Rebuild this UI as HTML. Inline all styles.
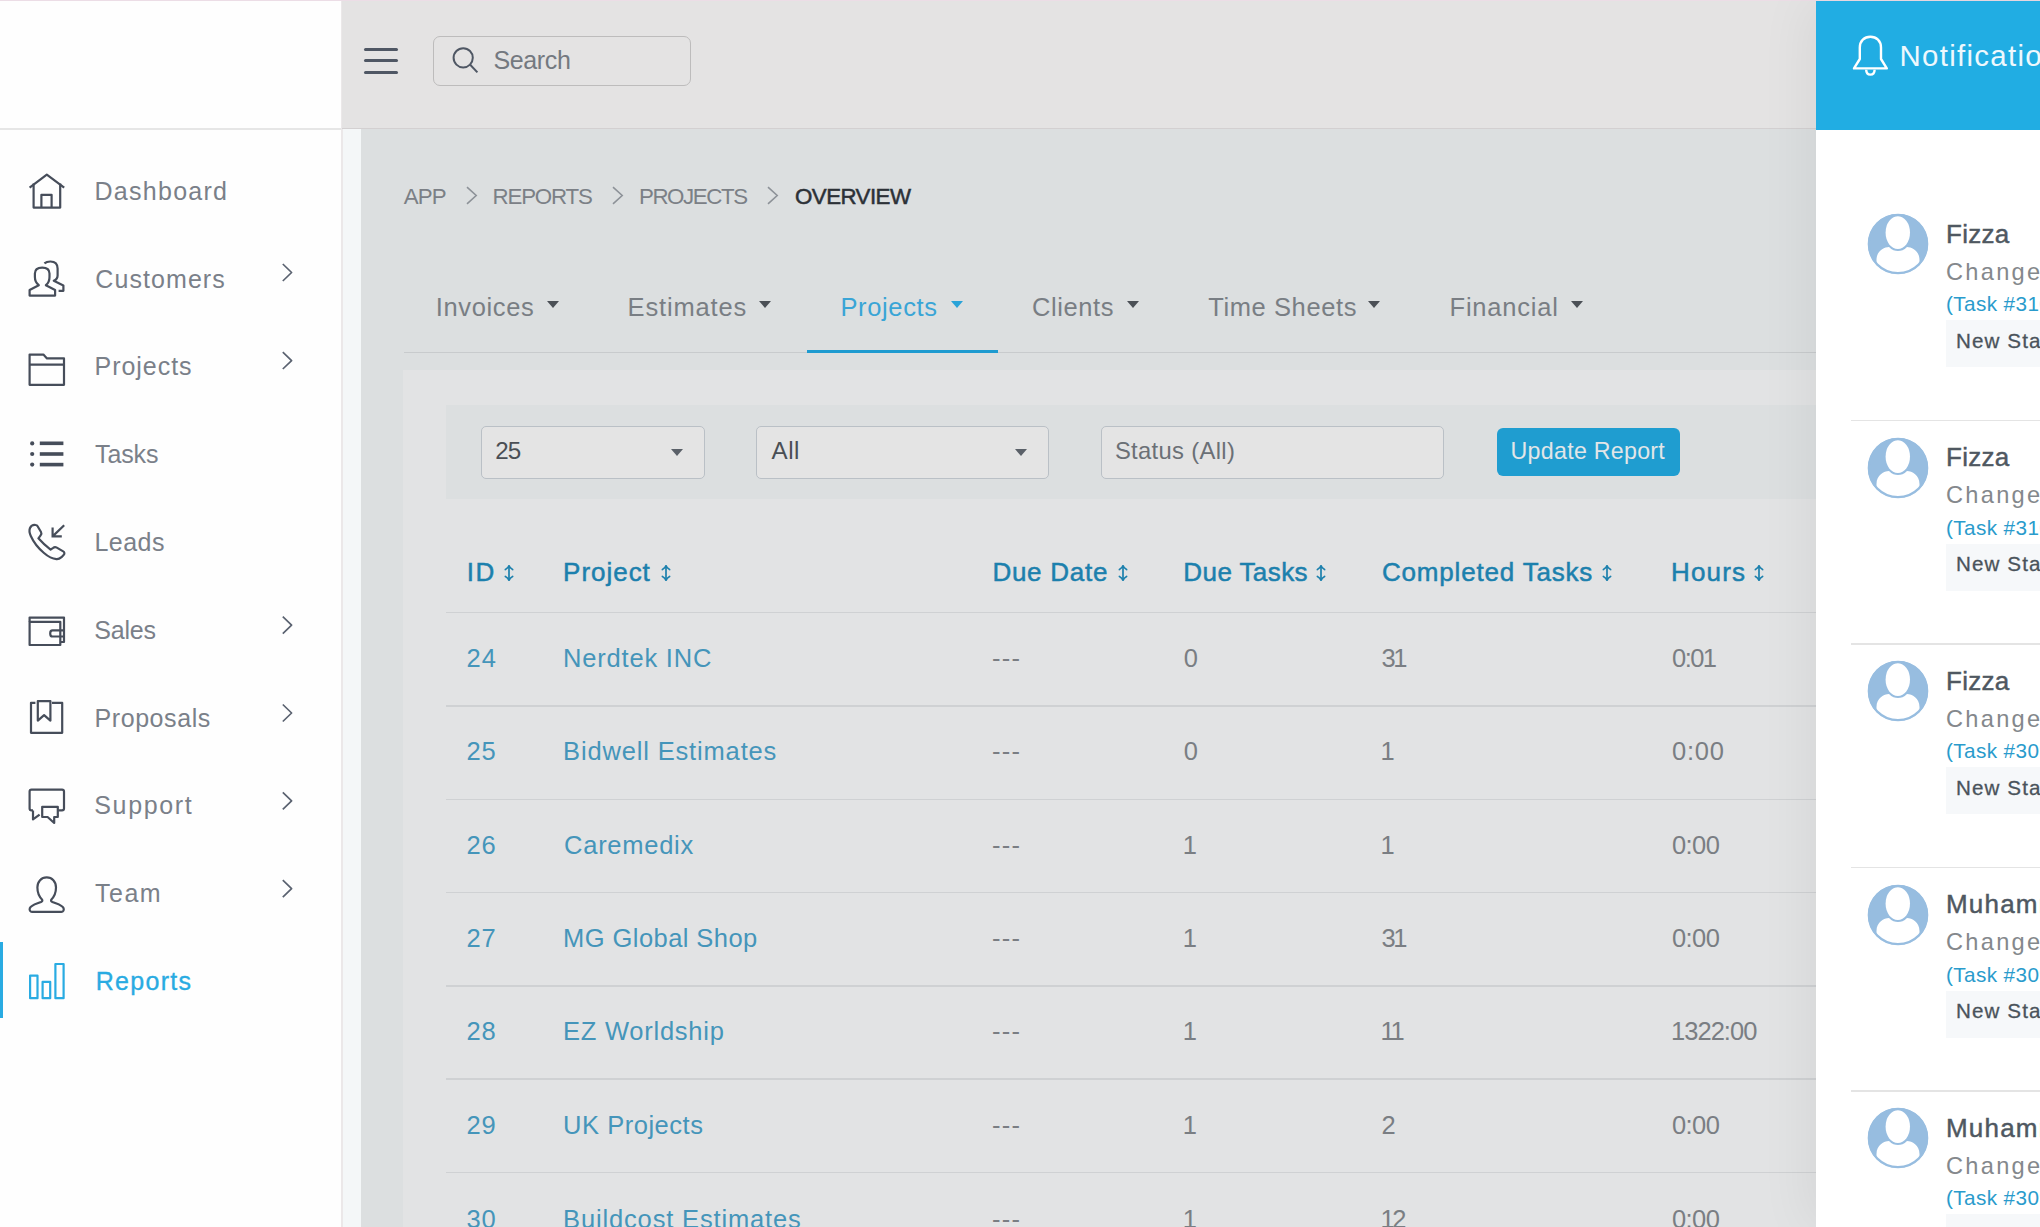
<!DOCTYPE html>
<html><head><meta charset="utf-8"><style>
html,body{margin:0;padding:0}
body{width:2040px;height:1227px;overflow:hidden;position:relative;background:#dcdfe0;font-family:"Liberation Sans",sans-serif}
.ab{position:absolute}
.t{position:absolute;line-height:1;white-space:nowrap}
.bm{display:inline-block;width:0;height:0}
.caret{position:absolute;width:0;height:0;border-left:6.2px solid transparent;border-right:6.2px solid transparent;border-top:7.4px solid #4b5056}
.sel{position:absolute;box-sizing:border-box;border:1.5px solid #bac0c6;border-radius:5px;background:#e4e4e4}
</style></head><body>
<div class="ab" style="left:0;top:0;width:2040px;height:1px;background:#ecdde6"></div>
<div class="ab" style="left:0;top:1px;width:341px;height:1226px;background:#fefefe"></div>
<div class="ab" style="left:341px;top:1px;width:1.6px;height:1226px;background:#ebe8e9"></div>
<div class="ab" style="left:0;top:128px;width:341px;height:1.5px;background:#e6e6e6"></div>
<div class="ab" style="left:342px;top:1px;width:1474px;height:127px;background:#e4e3e3"></div>
<div class="ab" style="left:342px;top:128px;width:1474px;height:1px;background:#d3d0d1"></div>
<div class="ab" style="left:342.6px;top:129px;width:18.4px;height:1100px;background:#f4f7f8"></div>
<div class="ab" style="left:0;top:942px;width:3px;height:76px;background:#29abe2"></div>
<!-- hamburger -->
<div class="ab" style="left:363.5px;top:47.5px;width:34.6px;height:3px;border-radius:1.5px;background:#4f5764"></div>
<div class="ab" style="left:363.5px;top:59px;width:34.6px;height:3px;border-radius:1.5px;background:#4f5764"></div>
<div class="ab" style="left:363.5px;top:70.8px;width:34.6px;height:3px;border-radius:1.5px;background:#4f5764"></div>
<!-- search box -->
<div class="ab" style="left:432.5px;top:36.3px;width:258px;height:50px;box-sizing:border-box;border:1.5px solid #bdbcbc;border-radius:7px"></div>
<svg class="ab" style="left:448px;top:44px" width="34" height="34" viewBox="0 0 34 34" fill="none" stroke="#4f5764" stroke-width="2"><circle cx="15.2" cy="13.8" r="9.6"/><path d="M22.2 20.8 L29.4 28.4"/></svg>
<!-- breadcrumbs chevrons -->
<svg class="ab" style="left:466.3px;top:186px" width="12" height="19" viewBox="0 0 12 19" fill="none" stroke="#8d9298" stroke-width="1.6"><path d="M1 1.2 L10.2 9.5 L1 17.8"/></svg><svg class="ab" style="left:611.5px;top:186px" width="12" height="19" viewBox="0 0 12 19" fill="none" stroke="#8d9298" stroke-width="1.6"><path d="M1 1.2 L10.2 9.5 L1 17.8"/></svg><svg class="ab" style="left:767px;top:186px" width="12" height="19" viewBox="0 0 12 19" fill="none" stroke="#8d9298" stroke-width="1.6"><path d="M1 1.2 L10.2 9.5 L1 17.8"/></svg>
<!-- tabs -->
<div class="ab" style="left:403.5px;top:352px;width:1413px;height:1.3px;background:#c8cbcd"></div>
<div class="ab" style="left:807px;top:350.3px;width:191px;height:3.2px;background:#1e9bd0"></div>
<div class="caret" style="left:546.5px;top:301px;border-top-color:#4b5056"></div><div class="caret" style="left:759.4px;top:301px;border-top-color:#4b5056"></div><div class="caret" style="left:950.6px;top:301px;border-top-color:#29a3d8"></div><div class="caret" style="left:1127px;top:301px;border-top-color:#4b5056"></div><div class="caret" style="left:1368px;top:301px;border-top-color:#4b5056"></div><div class="caret" style="left:1570.6px;top:301px;border-top-color:#4b5056"></div>
<!-- card -->
<div class="ab" style="left:403px;top:370px;width:1413px;height:860px;background:#e2e3e4"></div>
<div class="ab" style="left:446px;top:405px;width:1370px;height:94px;background:#dcdfe0"></div>
<div class="sel" style="left:481px;top:425.8px;width:224px;height:53px"></div>
<div class="sel" style="left:756px;top:425.8px;width:293px;height:53px"></div>
<div class="sel" style="left:1100.5px;top:425.8px;width:343.5px;height:53px"></div>
<div class="caret" style="left:670.8px;top:449px;border-left-width:6.7px;border-right-width:6.7px;border-top-width:7px;border-top-color:#5a6068"></div>
<div class="caret" style="left:1015.2px;top:449px;border-left-width:6.7px;border-right-width:6.7px;border-top-width:7px;border-top-color:#5a6068"></div>
<div class="ab" style="left:1497px;top:428.3px;width:183px;height:48px;border-radius:6px;background:#1f9dd0"></div>
<!-- table -->
<div class="ab" style="left:446px;top:611.5px;width:1370px;height:1.5px;background:#cfd1d3"></div><div class="ab" style="left:446px;top:705.0px;width:1370px;height:1.5px;background:#cfd1d3"></div><div class="ab" style="left:446px;top:798.5px;width:1370px;height:1.5px;background:#cfd1d3"></div><div class="ab" style="left:446px;top:891.9px;width:1370px;height:1.5px;background:#cfd1d3"></div><div class="ab" style="left:446px;top:985.1px;width:1370px;height:1.5px;background:#cfd1d3"></div><div class="ab" style="left:446px;top:1078.3px;width:1370px;height:1.5px;background:#cfd1d3"></div><div class="ab" style="left:446px;top:1171.8px;width:1370px;height:1.5px;background:#cfd1d3"></div>
<svg class="ab" style="left:503px;top:564.2px" width="12" height="18" viewBox="0 0 12 18" fill="none" stroke="#1c80ad" stroke-width="1.7" stroke-linecap="round"><path d="M6 2 V16"/><path d="M2.4 5.6 C4.6 4.6 5.6 3 6 1.4 C6.4 3 7.4 4.6 9.6 5.6 M2.4 12.4 C4.6 13.4 5.6 15 6 16.6 C6.4 15 7.4 13.4 9.6 12.4"/></svg><svg class="ab" style="left:660.2px;top:564.2px" width="12" height="18" viewBox="0 0 12 18" fill="none" stroke="#1c80ad" stroke-width="1.7" stroke-linecap="round"><path d="M6 2 V16"/><path d="M2.4 5.6 C4.6 4.6 5.6 3 6 1.4 C6.4 3 7.4 4.6 9.6 5.6 M2.4 12.4 C4.6 13.4 5.6 15 6 16.6 C6.4 15 7.4 13.4 9.6 12.4"/></svg><svg class="ab" style="left:1116.9px;top:564.2px" width="12" height="18" viewBox="0 0 12 18" fill="none" stroke="#1c80ad" stroke-width="1.7" stroke-linecap="round"><path d="M6 2 V16"/><path d="M2.4 5.6 C4.6 4.6 5.6 3 6 1.4 C6.4 3 7.4 4.6 9.6 5.6 M2.4 12.4 C4.6 13.4 5.6 15 6 16.6 C6.4 15 7.4 13.4 9.6 12.4"/></svg><svg class="ab" style="left:1315.2px;top:564.2px" width="12" height="18" viewBox="0 0 12 18" fill="none" stroke="#1c80ad" stroke-width="1.7" stroke-linecap="round"><path d="M6 2 V16"/><path d="M2.4 5.6 C4.6 4.6 5.6 3 6 1.4 C6.4 3 7.4 4.6 9.6 5.6 M2.4 12.4 C4.6 13.4 5.6 15 6 16.6 C6.4 15 7.4 13.4 9.6 12.4"/></svg><svg class="ab" style="left:1600.5px;top:564.2px" width="12" height="18" viewBox="0 0 12 18" fill="none" stroke="#1c80ad" stroke-width="1.7" stroke-linecap="round"><path d="M6 2 V16"/><path d="M2.4 5.6 C4.6 4.6 5.6 3 6 1.4 C6.4 3 7.4 4.6 9.6 5.6 M2.4 12.4 C4.6 13.4 5.6 15 6 16.6 C6.4 15 7.4 13.4 9.6 12.4"/></svg><svg class="ab" style="left:1753.3px;top:564.2px" width="12" height="18" viewBox="0 0 12 18" fill="none" stroke="#1c80ad" stroke-width="1.7" stroke-linecap="round"><path d="M6 2 V16"/><path d="M2.4 5.6 C4.6 4.6 5.6 3 6 1.4 C6.4 3 7.4 4.6 9.6 5.6 M2.4 12.4 C4.6 13.4 5.6 15 6 16.6 C6.4 15 7.4 13.4 9.6 12.4"/></svg>
<!-- notif panel -->
<div class="ab" style="left:1816px;top:1px;width:300px;height:1226px;background:#ffffff;box-shadow:-8px 0 50px rgba(0,0,0,0.06)"></div>
<div class="ab" style="left:1816px;top:1px;width:300px;height:128.6px;background:#21ade3"></div>
<svg class="ab" style="left:1850px;top:34px" width="42" height="44" viewBox="0 0 42 44" fill="none" stroke="#fff" stroke-width="2.4" stroke-linejoin="round"><path d="M4 34.4 L9.8 25 V13.6 C9.8 6.8 14.4 2.8 20.4 2.8 C26.4 2.8 31 6.8 31 13.6 V25 L36.8 34.4 Z"/><path d="M16.2 35.8 C16.2 39 18 40.6 20.4 40.6 C22.8 40.6 24.6 39 24.6 35.8"/></svg>
<svg class="ab" style="left:1867px;top:213.0px" width="62" height="62" viewBox="0 0 62 62">
<defs><clipPath id="cp0"><circle cx="31" cy="31" r="30"/></clipPath></defs>
<circle cx="31" cy="31" r="30" fill="#97bde0"/>
<g clip-path="url(#cp0)" fill="#fff"><ellipse cx="30.8" cy="19.6" rx="12.2" ry="16.4"/><path d="M9.5 61 V47 C9.5 38 17 34 22 34 C25 37 28 38 31 38 C34 38 37 37 40 34 C45 34 52.5 38 52.5 47 V61 Z"/></g><circle cx="31" cy="31" r="29.2" fill="none" stroke="#97bde0" stroke-width="2.2"/>
</svg><div class="ab" style="left:1946px;top:320.3px;width:200px;height:47px;background:#f6f8fa"></div><div class="ab" style="left:1851px;top:419.6px;width:200px;height:1.5px;background:#e4e4e4"></div><svg class="ab" style="left:1867px;top:436.5px" width="62" height="62" viewBox="0 0 62 62">
<defs><clipPath id="cp1"><circle cx="31" cy="31" r="30"/></clipPath></defs>
<circle cx="31" cy="31" r="30" fill="#97bde0"/>
<g clip-path="url(#cp1)" fill="#fff"><ellipse cx="30.8" cy="19.6" rx="12.2" ry="16.4"/><path d="M9.5 61 V47 C9.5 38 17 34 22 34 C25 37 28 38 31 38 C34 38 37 37 40 34 C45 34 52.5 38 52.5 47 V61 Z"/></g><circle cx="31" cy="31" r="29.2" fill="none" stroke="#97bde0" stroke-width="2.2"/>
</svg><div class="ab" style="left:1946px;top:543.8px;width:200px;height:47px;background:#f6f8fa"></div><div class="ab" style="left:1851px;top:643.1px;width:200px;height:1.5px;background:#e4e4e4"></div><svg class="ab" style="left:1867px;top:660.0px" width="62" height="62" viewBox="0 0 62 62">
<defs><clipPath id="cp2"><circle cx="31" cy="31" r="30"/></clipPath></defs>
<circle cx="31" cy="31" r="30" fill="#97bde0"/>
<g clip-path="url(#cp2)" fill="#fff"><ellipse cx="30.8" cy="19.6" rx="12.2" ry="16.4"/><path d="M9.5 61 V47 C9.5 38 17 34 22 34 C25 37 28 38 31 38 C34 38 37 37 40 34 C45 34 52.5 38 52.5 47 V61 Z"/></g><circle cx="31" cy="31" r="29.2" fill="none" stroke="#97bde0" stroke-width="2.2"/>
</svg><div class="ab" style="left:1946px;top:767.3px;width:200px;height:47px;background:#f6f8fa"></div><div class="ab" style="left:1851px;top:866.6px;width:200px;height:1.5px;background:#e4e4e4"></div><svg class="ab" style="left:1867px;top:883.5px" width="62" height="62" viewBox="0 0 62 62">
<defs><clipPath id="cp3"><circle cx="31" cy="31" r="30"/></clipPath></defs>
<circle cx="31" cy="31" r="30" fill="#97bde0"/>
<g clip-path="url(#cp3)" fill="#fff"><ellipse cx="30.8" cy="19.6" rx="12.2" ry="16.4"/><path d="M9.5 61 V47 C9.5 38 17 34 22 34 C25 37 28 38 31 38 C34 38 37 37 40 34 C45 34 52.5 38 52.5 47 V61 Z"/></g><circle cx="31" cy="31" r="29.2" fill="none" stroke="#97bde0" stroke-width="2.2"/>
</svg><div class="ab" style="left:1946px;top:990.8px;width:200px;height:47px;background:#f6f8fa"></div><div class="ab" style="left:1851px;top:1090.1px;width:200px;height:1.5px;background:#e4e4e4"></div><svg class="ab" style="left:1867px;top:1107.0px" width="62" height="62" viewBox="0 0 62 62">
<defs><clipPath id="cp4"><circle cx="31" cy="31" r="30"/></clipPath></defs>
<circle cx="31" cy="31" r="30" fill="#97bde0"/>
<g clip-path="url(#cp4)" fill="#fff"><ellipse cx="30.8" cy="19.6" rx="12.2" ry="16.4"/><path d="M9.5 61 V47 C9.5 38 17 34 22 34 C25 37 28 38 31 38 C34 38 37 37 40 34 C45 34 52.5 38 52.5 47 V61 Z"/></g><circle cx="31" cy="31" r="29.2" fill="none" stroke="#97bde0" stroke-width="2.2"/>
</svg><div class="ab" style="left:1946px;top:1214.3px;width:200px;height:47px;background:#f6f8fa"></div>
<svg class="ab" style="left:0;top:0" width="341" height="1227" viewBox="0 0 341 1227" fill="none" stroke="#464d5a" stroke-width="2.2" stroke-linejoin="round">
<path d="M29.6 187.6 L46.8 174.6 L64.2 187.6"/>
<path d="M33.6 183.5 V207.6 H60.2 V183.5"/>
<path d="M41.4 207.6 V194.8 H51.6 V207.6"/>
<!-- customers -->
<path d="M44.4 263.4 C46 262 48 261.5 50.4 261.5 C54.8 261.5 57.6 264 57.6 268.6 V275.4 C57.6 277.8 56.2 279.6 53.8 280.8 L63.4 285.6 V290.8 H58.6"/>
<path d="M38.8 285.2 C36.2 283.2 34.9 280.5 34.9 277 V273.6 C34.9 269.6 37.8 267.6 42.2 267.6 C46.6 267.6 49.5 269.6 49.5 273.6 V277 C49.5 280.5 48.4 283.2 45.9 285.2 L55.1 290 V295.6 H29.6 V290 Z"/>
<!-- folder -->
<path d="M29.6 384.8 V354.6 H43.4 L47 358.4 H64 V384.8 Z"/>
<path d="M29.6 364.6 H64"/>
<!-- leads: phone -->
<path d="M35.7 525 C33.5 524.6 31 526 30 528 C29.2 530 29.4 533 30.8 536 C33.5 542 38 548 44 553 C48 556.5 52 558.8 56.5 559.2 C58.5 559.4 60 558.5 61.5 557.2 L63.6 555 C64.8 553.8 64.6 552.2 63.2 551.4 L56.8 547.6 C55.6 546.9 54.2 547 53.2 547.8 L50.6 549.6 C46 546.2 41.8 542.2 38.4 538.3 L40.6 535.4 C41.4 534.4 41.6 533 41 532 L37.6 526.2 C37.2 525.5 36.5 525.1 35.7 525 Z"/>
<path d="M64.2 525.2 L52.6 536.4 M52.6 527.4 V536.4 H61.8" stroke-width="2.2" stroke-linejoin="miter"/>
<!-- sales: wallet -->
<path d="M29.6 621.8 V617.6 H64 V642 H60.3"/>
<path d="M29.6 621.8 H60.3 V645 H29.6 Z"/>
<path d="M64 630.4 H52.5 C51 630.4 50.2 631.5 50.2 633.4 C50.2 635.4 51 636.5 52.5 636.5 H64"/>
<!-- proposals -->
<path d="M35.4 702.8 H31 V732.8 H62.2 V702.8 H52"/>
<path d="M37.8 701.2 V720.6 L44.1 715.2 L50.4 720.6 V701.2 Z"/>
<!-- support -->
<path d="M33 810.4 H31.5 C30.3 810.4 29.6 809.7 29.6 808.5 V791.5 C29.6 790.3 30.3 789.6 31.5 789.6 H62 C63.2 789.6 64 790.3 64 791.5 V808.5 C64 809.7 63.2 810.4 62 810.4 H58.2"/>
<path d="M33 810.4 V819.4 L39.6 814.6"/>
<path d="M42.2 806.8 H57.8 V817 H54.2 V823 L47.6 817 H42.2 Z"/>
<!-- team -->
<path d="M46.7 877.4 C41.3 877.4 37.4 881.4 37.4 887.6 C37.4 893.4 39.6 897.2 42.2 899.8 C42.6 900.8 42.2 901.4 41 902 C37 903.8 31.4 904.8 29.8 908.2 C29.2 910.2 30.2 911.8 32 911.8 H61.4 C63.2 911.8 64.2 910.2 63.6 908.2 C62 904.8 56.4 903.8 52.4 902 C51.2 901.4 50.8 900.8 51.2 899.8 C53.8 897.2 56 893.4 56 887.6 C56 881.4 52.1 877.4 46.7 877.4 Z"/>
<!-- chevrons -->
<g stroke="#5a6270" stroke-width="1.7">
<path d="M282.8 264 L291.6 272.5 L282.8 281"/>
<path d="M282.8 352.2 L291.6 360.6 L282.8 369"/>
<path d="M282.8 616.7 L291.6 625.2 L282.8 633.7"/>
<path d="M282.8 704.5 L291.6 713 L282.8 721.5"/>
<path d="M282.8 792.3 L291.6 800.8 L282.8 809.3"/>
<path d="M282.8 880.1 L291.6 888.6 L282.8 897.1"/>
</g>
<!-- reports -->
<g stroke="#29abe2" stroke-width="2.2">
<rect x="30.1" y="975.6" width="7.4" height="22.6"/>
<rect x="42.6" y="981.8" width="7.6" height="16.4"/>
<rect x="55.4" y="964" width="8.2" height="34.2"/>
</g>
</svg>
<svg class="ab" style="left:0;top:0" width="80" height="1227" viewBox="0 0 80 1227" fill="#464d5a">
<circle cx="32.2" cy="443.4" r="2.1"/><circle cx="32.2" cy="454" r="2.1"/><circle cx="32.2" cy="464.6" r="2.1"/>
<rect x="39.8" y="441.5" width="23.6" height="3.6"/><rect x="39.8" y="452.2" width="23.6" height="3.6"/><rect x="39.8" y="462.8" width="23.6" height="3.6"/>
</svg>
<div class="t" id="sb0" style="left:94.50px;top:178.72px;font-size:25px;letter-spacing:1.275px;color:#7a8089;">Dashboard</div>
<div class="t" id="sb1" style="left:95.30px;top:266.51px;font-size:25px;letter-spacing:1.075px;color:#7a8089;">Customers</div>
<div class="t" id="sb2" style="left:94.50px;top:354.30px;font-size:25px;letter-spacing:0.971px;color:#7a8089;">Projects</div>
<div class="t" id="sb3" style="left:95.00px;top:442.10px;font-size:25px;letter-spacing:-0.100px;color:#7a8089;">Tasks</div>
<div class="t" id="sb4" style="left:94.50px;top:529.91px;font-size:25px;letter-spacing:0.450px;color:#7a8089;">Leads</div>
<div class="t" id="sb5" style="left:94.30px;top:617.72px;font-size:25px;letter-spacing:-0.200px;color:#7a8089;">Sales</div>
<div class="t" id="sb6" style="left:94.50px;top:705.51px;font-size:25px;letter-spacing:0.575px;color:#7a8089;">Proposals</div>
<div class="t" id="sb7" style="left:94.30px;top:793.30px;font-size:25px;letter-spacing:1.633px;color:#7a8089;">Support</div>
<div class="t" id="sb8" style="left:95.10px;top:881.10px;font-size:25px;letter-spacing:1.467px;color:#7a8089;">Team</div>
<div class="t" id="sb9" style="left:95.70px;top:968.91px;font-size:25px;letter-spacing:1.300px;color:#29abe2;-webkit-text-stroke:0.35px #29abe2;">Reports</div>
<div class="t" id="search" style="left:493.40px;top:48.41px;font-size:25px;letter-spacing:-0.360px;color:#747980;">Search</div>
<div class="t" id="bc0" style="left:403.80px;top:185.91px;font-size:22.3px;letter-spacing:-0.900px;color:#7b8086;">APP</div>
<div class="t" id="bc1" style="left:492.50px;top:185.91px;font-size:22.3px;letter-spacing:-1.167px;color:#7b8086;">REPORTS</div>
<div class="t" id="bc2" style="left:638.90px;top:185.91px;font-size:22.3px;letter-spacing:-1.371px;color:#7b8086;">PROJECTS</div>
<div class="t" id="bc3" style="left:795.00px;top:185.91px;font-size:22.3px;letter-spacing:-0.543px;color:#2c3137;-webkit-text-stroke:0.5px #2c3137;">OVERVIEW</div>
<div class="t" id="tab0" style="left:435.80px;top:294.90px;font-size:25.5px;letter-spacing:0.629px;color:#797e84;">Invoices</div>
<div class="t" id="tab1" style="left:627.60px;top:294.90px;font-size:25.5px;letter-spacing:0.825px;color:#797e84;">Estimates</div>
<div class="t" id="tab2" style="left:840.40px;top:294.90px;font-size:25.5px;letter-spacing:0.657px;color:#3aa5d6;">Projects</div>
<div class="t" id="tab3" style="left:1032.00px;top:294.90px;font-size:25.5px;letter-spacing:0.600px;color:#797e84;">Clients</div>
<div class="t" id="tab4" style="left:1208.20px;top:294.90px;font-size:25.5px;letter-spacing:0.600px;color:#797e84;">Time Sheets</div>
<div class="t" id="tab5" style="left:1449.50px;top:294.90px;font-size:25.5px;letter-spacing:0.800px;color:#797e84;">Financial</div>
<div class="t" id="f25" style="left:495.20px;top:438.71px;font-size:24.2px;letter-spacing:-1.000px;color:#4a4f55;">25</div>
<div class="t" id="fall" style="left:771.60px;top:438.71px;font-size:24.2px;letter-spacing:0.500px;color:#4a4f55;">All</div>
<div class="t" id="fstat" style="left:1114.90px;top:438.51px;font-size:23.8px;letter-spacing:0.327px;color:#6b7076;">Status (All)</div>
<div class="t" id="btn" style="left:1510.60px;top:440.21px;font-size:23.2px;letter-spacing:0.283px;color:#e2e6e8;">Update Report</div>
<div class="t" id="h0" style="left:466.70px;top:559.20px;font-size:26px;letter-spacing:1.600px;color:#1c80ad;-webkit-text-stroke:0.5px #1c80ad;">ID</div>
<div class="t" id="h1" style="left:563.10px;top:559.20px;font-size:26px;letter-spacing:0.967px;color:#1c80ad;-webkit-text-stroke:0.5px #1c80ad;">Project</div>
<div class="t" id="h2" style="left:992.40px;top:559.20px;font-size:26px;letter-spacing:0.743px;color:#1c80ad;-webkit-text-stroke:0.5px #1c80ad;">Due Date</div>
<div class="t" id="h3" style="left:1183.30px;top:559.20px;font-size:26px;letter-spacing:0.425px;color:#1c80ad;-webkit-text-stroke:0.5px #1c80ad;">Due Tasks</div>
<div class="t" id="h4" style="left:1382.00px;top:559.20px;font-size:26px;letter-spacing:0.814px;color:#1c80ad;-webkit-text-stroke:0.5px #1c80ad;">Completed Tasks</div>
<div class="t" id="h5" style="left:1671.00px;top:559.20px;font-size:26px;letter-spacing:1.150px;color:#1c80ad;-webkit-text-stroke:0.5px #1c80ad;">Hours</div>
<div class="t" id="r0id" style="left:466.60px;top:645.82px;font-size:25.5px;letter-spacing:1.000px;color:#4595ba;">24</div>
<div class="t" id="r0p" style="left:563.10px;top:645.82px;font-size:25.5px;letter-spacing:0.800px;color:#4595ba;">Nerdtek INC</div>
<div class="t" id="r0d" style="left:992.00px;top:645.82px;font-size:25.5px;letter-spacing:1.200px;color:#7a7e83;">---</div>
<div class="t" id="r0t" style="left:1183.80px;top:645.82px;font-size:25.5px;letter-spacing:0.000px;color:#7a7e83;">0</div>
<div class="t" id="r0c" style="left:1381.60px;top:645.82px;font-size:25.5px;letter-spacing:-2.500px;color:#7a7e83;">31</div>
<div class="t" id="r0h" style="left:1672.00px;top:645.82px;font-size:25.5px;letter-spacing:-1.533px;color:#7a7e83;">0:01</div>
<div class="t" id="r1id" style="left:466.60px;top:739.20px;font-size:25.5px;letter-spacing:0.600px;color:#4595ba;">25</div>
<div class="t" id="r1p" style="left:563.10px;top:739.20px;font-size:25.5px;letter-spacing:0.838px;color:#4595ba;">Bidwell Estimates</div>
<div class="t" id="r1d" style="left:992.00px;top:739.20px;font-size:25.5px;letter-spacing:1.200px;color:#7a7e83;">---</div>
<div class="t" id="r1t" style="left:1183.80px;top:739.20px;font-size:25.5px;letter-spacing:0.000px;color:#7a7e83;">0</div>
<div class="t" id="r1c" style="left:1380.60px;top:739.20px;font-size:25.5px;letter-spacing:-2.500px;color:#7a7e83;">1</div>
<div class="t" id="r1h" style="left:1672.00px;top:739.20px;font-size:25.5px;letter-spacing:0.733px;color:#7a7e83;">0:00</div>
<div class="t" id="r2id" style="left:466.60px;top:832.61px;font-size:25.5px;letter-spacing:0.800px;color:#4595ba;">26</div>
<div class="t" id="r2p" style="left:564.10px;top:832.61px;font-size:25.5px;letter-spacing:0.725px;color:#4595ba;">Caremedix</div>
<div class="t" id="r2d" style="left:992.00px;top:832.61px;font-size:25.5px;letter-spacing:1.200px;color:#7a7e83;">---</div>
<div class="t" id="r2t" style="left:1182.80px;top:832.61px;font-size:25.5px;letter-spacing:0.000px;color:#7a7e83;">1</div>
<div class="t" id="r2c" style="left:1380.60px;top:832.61px;font-size:25.5px;letter-spacing:-2.500px;color:#7a7e83;">1</div>
<div class="t" id="r2h" style="left:1672.00px;top:832.61px;font-size:25.5px;letter-spacing:-0.589px;color:#7a7e83;">0:00</div>
<div class="t" id="r3id" style="left:466.60px;top:926.01px;font-size:25.5px;letter-spacing:0.800px;color:#4595ba;">27</div>
<div class="t" id="r3p" style="left:563.10px;top:926.01px;font-size:25.5px;letter-spacing:0.431px;color:#4595ba;">MG Global Shop</div>
<div class="t" id="r3d" style="left:992.00px;top:926.01px;font-size:25.5px;letter-spacing:1.200px;color:#7a7e83;">---</div>
<div class="t" id="r3t" style="left:1182.80px;top:926.01px;font-size:25.5px;letter-spacing:0.000px;color:#7a7e83;">1</div>
<div class="t" id="r3c" style="left:1381.60px;top:926.01px;font-size:25.5px;letter-spacing:-2.500px;color:#7a7e83;">31</div>
<div class="t" id="r3h" style="left:1672.00px;top:926.01px;font-size:25.5px;letter-spacing:-0.589px;color:#7a7e83;">0:00</div>
<div class="t" id="r4id" style="left:466.60px;top:1019.20px;font-size:25.5px;letter-spacing:0.800px;color:#4595ba;">28</div>
<div class="t" id="r4p" style="left:563.10px;top:1019.20px;font-size:25.5px;letter-spacing:0.745px;color:#4595ba;">EZ Worldship</div>
<div class="t" id="r4d" style="left:992.00px;top:1019.20px;font-size:25.5px;letter-spacing:1.200px;color:#7a7e83;">---</div>
<div class="t" id="r4t" style="left:1182.80px;top:1019.20px;font-size:25.5px;letter-spacing:0.000px;color:#7a7e83;">1</div>
<div class="t" id="r4c" style="left:1380.60px;top:1019.20px;font-size:25.5px;letter-spacing:-2.500px;color:#7a7e83;">11</div>
<div class="t" id="r4h" style="left:1671.00px;top:1019.20px;font-size:25.5px;letter-spacing:-0.967px;color:#7a7e83;">1322:00</div>
<div class="t" id="r5id" style="left:466.60px;top:1112.70px;font-size:25.5px;letter-spacing:0.800px;color:#4595ba;">29</div>
<div class="t" id="r5p" style="left:563.10px;top:1112.70px;font-size:25.5px;letter-spacing:0.520px;color:#4595ba;">UK Projects</div>
<div class="t" id="r5d" style="left:992.00px;top:1112.70px;font-size:25.5px;letter-spacing:1.200px;color:#7a7e83;">---</div>
<div class="t" id="r5t" style="left:1182.80px;top:1112.70px;font-size:25.5px;letter-spacing:0.000px;color:#7a7e83;">1</div>
<div class="t" id="r5c" style="left:1381.60px;top:1112.70px;font-size:25.5px;letter-spacing:-2.500px;color:#7a7e83;">2</div>
<div class="t" id="r5h" style="left:1672.00px;top:1112.70px;font-size:25.5px;letter-spacing:-0.589px;color:#7a7e83;">0:00</div>
<div class="t" id="r6id" style="left:466.60px;top:1206.51px;font-size:25.5px;letter-spacing:0.800px;color:#4595ba;">30</div>
<div class="t" id="r6p" style="left:563.10px;top:1206.51px;font-size:25.5px;letter-spacing:0.844px;color:#4595ba;">Buildcost Estimates</div>
<div class="t" id="r6d" style="left:992.00px;top:1206.51px;font-size:25.5px;letter-spacing:1.200px;color:#7a7e83;">---</div>
<div class="t" id="r6t" style="left:1182.80px;top:1206.51px;font-size:25.5px;letter-spacing:0.000px;color:#7a7e83;">1</div>
<div class="t" id="r6c" style="left:1380.60px;top:1206.51px;font-size:25.5px;letter-spacing:-2.500px;color:#7a7e83;">12</div>
<div class="t" id="r6h" style="left:1672.00px;top:1206.51px;font-size:25.5px;letter-spacing:-0.589px;color:#7a7e83;">0:00</div>
<div class="t" id="ntitle" style="left:1899.60px;top:40.90px;font-size:29.4px;letter-spacing:1.300px;color:#eef8fd;">Notifications</div>
<div class="t" id="nn0" style="left:1946.00px;top:220.51px;font-size:26px;letter-spacing:0.250px;color:#4f5861;-webkit-text-stroke:0.45px #4f5861;">Fizza</div>
<div class="t" id="nc0" style="left:1946.00px;top:260.61px;font-size:23.6px;letter-spacing:2.300px;color:#84888c;">Changed the status</div>
<div class="t" id="nt0" style="left:1946.00px;top:294.21px;font-size:20.7px;letter-spacing:0.400px;color:#2a9bcc;">(Task #3107)</div>
<div class="t" id="ns0" style="left:1956.00px;top:330.81px;font-size:20.6px;letter-spacing:1.100px;color:#4a535b;-webkit-text-stroke:0.3px #4a535b;">New Status: Completed</div>
<div class="t" id="nn1" style="left:1946.00px;top:444.01px;font-size:26px;letter-spacing:0.250px;color:#4f5861;-webkit-text-stroke:0.45px #4f5861;">Fizza</div>
<div class="t" id="nc1" style="left:1946.00px;top:484.11px;font-size:23.6px;letter-spacing:2.300px;color:#84888c;">Changed the status</div>
<div class="t" id="nt1" style="left:1946.00px;top:517.71px;font-size:20.7px;letter-spacing:0.400px;color:#2a9bcc;">(Task #3106)</div>
<div class="t" id="ns1" style="left:1956.00px;top:554.31px;font-size:20.6px;letter-spacing:1.100px;color:#4a535b;-webkit-text-stroke:0.3px #4a535b;">New Status: Completed</div>
<div class="t" id="nn2" style="left:1946.00px;top:667.51px;font-size:26px;letter-spacing:0.250px;color:#4f5861;-webkit-text-stroke:0.45px #4f5861;">Fizza</div>
<div class="t" id="nc2" style="left:1946.00px;top:707.61px;font-size:23.6px;letter-spacing:2.300px;color:#84888c;">Changed the status</div>
<div class="t" id="nt2" style="left:1946.00px;top:741.21px;font-size:20.7px;letter-spacing:0.400px;color:#2a9bcc;">(Task #3097)</div>
<div class="t" id="ns2" style="left:1956.00px;top:777.81px;font-size:20.6px;letter-spacing:1.100px;color:#4a535b;-webkit-text-stroke:0.3px #4a535b;">New Status: Completed</div>
<div class="t" id="nn3" style="left:1946.00px;top:891.01px;font-size:26px;letter-spacing:1.200px;color:#4f5861;-webkit-text-stroke:0.45px #4f5861;">Muhammad Ali</div>
<div class="t" id="nc3" style="left:1946.00px;top:931.11px;font-size:23.6px;letter-spacing:2.300px;color:#84888c;">Changed the status</div>
<div class="t" id="nt3" style="left:1946.00px;top:964.71px;font-size:20.7px;letter-spacing:0.400px;color:#2a9bcc;">(Task #3096)</div>
<div class="t" id="ns3" style="left:1956.00px;top:1001.31px;font-size:20.6px;letter-spacing:1.100px;color:#4a535b;-webkit-text-stroke:0.3px #4a535b;">New Status: Completed</div>
<div class="t" id="nn4" style="left:1946.00px;top:1114.51px;font-size:26px;letter-spacing:1.200px;color:#4f5861;-webkit-text-stroke:0.45px #4f5861;">Muhammad Ali</div>
<div class="t" id="nc4" style="left:1946.00px;top:1154.61px;font-size:23.6px;letter-spacing:2.300px;color:#84888c;">Changed the status</div>
<div class="t" id="nt4" style="left:1946.00px;top:1188.21px;font-size:20.7px;letter-spacing:0.400px;color:#2a9bcc;">(Task #3095)</div>
</body></html>
